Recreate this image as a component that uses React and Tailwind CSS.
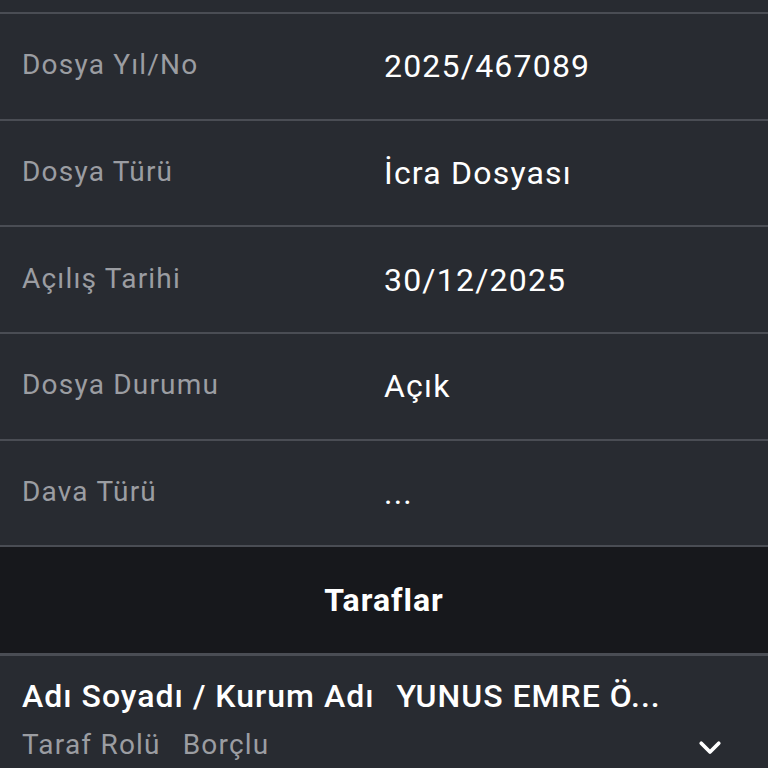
import React from 'react'

const rows = [
  { label: 'Dosya Yıl/No', value: '2025/467089' },
  { label: 'Dosya Türü', value: 'İcra Dosyası' },
  { label: 'Açılış Tarihi', value: '30/12/2025' },
  { label: 'Dosya Durumu', value: 'Açık' },
  { label: 'Dava Türü', value: '...' },
]

const DetailRow = ({ label, value }) => (
  <div className="flex h-[106.7px] items-center border-b-2 border-[#4a4d54] px-[22px]">
    <div className="w-[362px] shrink-0 text-[28px] tracking-[1.2px] text-[#9b9da2] mb-[2px]">{label}</div>
    <div className="text-[32px] tracking-[1.2px] text-white">{value}</div>
  </div>
)

export default function App() {
  return (
    <div
      className="h-[768px] w-[768px] overflow-hidden bg-[#282b31]"
      style={{ fontFamily: 'Roboto, "Noto Sans", sans-serif' }}
    >
      <div className="h-[12px]" />
      <div className="border-t-2 border-[#4a4d54]">
        {rows.map((row) => (
          <DetailRow key={row.label} label={row.label} value={row.value} />
        ))}
      </div>
      <div className="flex h-[109px] items-center justify-center border-b-[3px] border-[#4a4d54] bg-[#17181c]">
        <span className="text-[32px] font-bold tracking-[1px] text-white">Taraflar</span>
      </div>
      <div className="relative px-[22px] pt-[16px]">
        <div className="flex items-baseline text-[32px] font-medium tracking-[1px] text-white">
          <span>Adı Soyadı / Kurum Adı</span>
          <span className="ml-[22px]">YUNUS EMRE Ö...</span>
        </div>
        <div className="mt-[4px] flex items-baseline text-[28px] tracking-[1.2px] text-[#9b9da2]">
          <span>Taraf Rolü</span>
          <span className="ml-[22px]">Borçlu</span>
        </div>
        <svg
          className="absolute right-[43px] top-[76px]"
          width="30"
          height="30"
          viewBox="0 0 24 24"
          fill="none"
          stroke="white"
          strokeWidth="3"
          strokeLinecap="round"
          strokeLinejoin="round"
        >
          <path d="M5 9l7 7 7-7" />
        </svg>
      </div>
    </div>
  )
}
